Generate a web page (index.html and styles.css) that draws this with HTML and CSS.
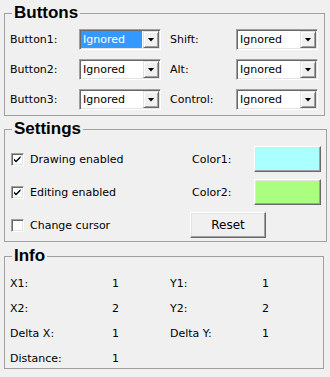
FILE: index.html
```html
<!DOCTYPE html>
<html>
<head>
  <meta charset="UTF-8">
  <title>Mouse settings</title>
  <link rel="stylesheet" href="styles.css">
</head>
<body>
  <fieldset class="group buttons-group">
    <legend>Buttons</legend>
    <div class="buttons-grid">
      <span>Button1:</span>
      <div class="combo selected"><span class="combo-text">Ignored</span><span class="combo-arrow"></span></div>
      <span>Shift:</span>
      <div class="combo"><span class="combo-text">Ignored</span><span class="combo-arrow"></span></div>

      <span>Button2:</span>
      <div class="combo"><span class="combo-text">Ignored</span><span class="combo-arrow"></span></div>
      <span>Alt:</span>
      <div class="combo"><span class="combo-text">Ignored</span><span class="combo-arrow"></span></div>

      <span>Button3:</span>
      <div class="combo"><span class="combo-text">Ignored</span><span class="combo-arrow"></span></div>
      <span>Control:</span>
      <div class="combo"><span class="combo-text">Ignored</span><span class="combo-arrow"></span></div>
    </div>
  </fieldset>

  <fieldset class="group settings-group">
    <legend>Settings</legend>
    <div class="settings-grid">
      <label class="check">
        <span class="box"><svg width="9" height="9" viewBox="0 0 9 9"><path d="M1 3.5 L3 5.5 L7.5 1 L7.5 3 L3 7.5 L1 5.5 Z" fill="#000"/></svg></span>
        Drawing enabled
      </label>
      <span>Color1:</span>
      <div class="button swatch cyan"></div>

      <label class="check">
        <span class="box"><svg width="9" height="9" viewBox="0 0 9 9"><path d="M1 3.5 L3 5.5 L7.5 1 L7.5 3 L3 7.5 L1 5.5 Z" fill="#000"/></svg></span>
        Editing enabled
      </label>
      <span>Color2:</span>
      <div class="button swatch green"></div>

      <label class="check">
        <span class="box"></span>
        Change cursor
      </label>
      <div class="button reset">Reset</div>
    </div>
  </fieldset>

  <fieldset class="group info-group">
    <legend>Info</legend>
    <div class="info-grid">
      <span>X1:</span><span>1</span><span>Y1:</span><span>1</span>
      <span>X2:</span><span>2</span><span>Y2:</span><span>2</span>
      <span>Delta X:</span><span>1</span><span>Delta Y:</span><span>1</span>
      <span>Distance:</span><span>1</span>
    </div>
  </fieldset>
</body>
</html>
```

FILE: styles.css
```css
body {
  margin: 0;
  background: #f0f0f0;
  color: #000;
  font-family: "DejaVu Sans", sans-serif;
  font-size: 11px;
}

.group {
  margin: 0 6px 0 4px;
  border: 1px solid #a0a0a0;
  padding: 0 5px 3px 5px;
}

.group legend {
  font-family: "Liberation Sans", Arial, sans-serif;
  font-weight: bold;
  font-size: 17px;
  line-height: 20px;
  padding: 0 2px;
  margin-left: 2px;
}

.buttons-group {
  margin-top: 3px;
  padding-top: 6px;
  padding-bottom: 5px;
}

.settings-group {
  margin-top: 3px;
  padding-top: 7px;
}

.info-group {
  margin-top: 4px;
  padding-top: 10px;
}

/* buttons */
.buttons-grid {
  display: grid;
  grid-template-columns: 69px 91px 66px 83px;
  grid-auto-rows: 21px;
  row-gap: 9px;
  align-items: center;
}

.combo {
  box-sizing: border-box;
  width: 82px;
  height: 21px;
  display: flex;
  background: #fff;
  border: 1px solid;
  border-color: #a0a0a0 #fff #fff #a0a0a0;
  box-shadow: inset 1px 1px 0 #696969, inset -1px -1px 0 #e3e3e3;
  padding: 1px 1px 1px 1px;
}

.combo-text {
  flex: 1;
  margin-left: 1px;
  padding-left: 1px;
  line-height: 17px;
}

.combo.selected .combo-text {
  background: #3399ff;
  color: #fff;
  margin-left: 0;
  padding-left: 2px;
  margin-right: 1px;
}

.combo-arrow {
  box-sizing: border-box;
  width: 16px;
  height: 17px;
  background: #f0f0f0;
  border: 1px solid;
  border-color: #e3e3e3 #696969 #696969 #e3e3e3;
  box-shadow: inset 1px 1px 0 #fff, inset -1px -1px 0 #a0a0a0;
  display: flex;
  align-items: center;
  justify-content: center;
}

.combo-arrow::after {
  content: "";
  width: 7px;
  height: 4px;
  background: #000;
  clip-path: polygon(0 0, 100% 0, 50% 100%);
}

/* settings */
.settings-grid {
  display: grid;
  grid-template-columns: 182px 62px 67px;
  grid-template-rows: 26px 26px 26px;
  row-gap: 7px;
  align-items: center;
}

.check {
  display: flex;
  align-items: center;
  gap: 6px;
  padding-left: 1px;
}

.box {
  box-sizing: border-box;
  width: 13px;
  height: 13px;
  background: #fff;
  border: 1px solid;
  border-color: #a0a0a0 #fff #fff #a0a0a0;
  box-shadow: inset 1px 1px 0 #696969, inset -1px -1px 0 #e3e3e3;
  display: flex;
  align-items: center;
  justify-content: center;
}

.box svg {
  display: block;
}

.button {
  box-sizing: border-box;
  height: 26px;
  border: 1px solid;
  border-color: #fff #696969 #696969 #fff;
  box-shadow: inset -1px -1px 0 #a0a0a0, inset 1px 1px 0 #e3e3e3;
  background: #f0f0f0;
}

.swatch.cyan {
  background: #aaffff;
}

.swatch.green {
  background: #aaff80;
}

.reset {
  grid-column: 2 / span 2;
  width: 76px;
  margin-left: -2px;
  display: flex;
  align-items: center;
  justify-content: center;
  font-size: 12px;
}

/* info */
.info-grid {
  display: grid;
  grid-template-columns: 102px 58px 92px 1fr;
  grid-auto-rows: 14px;
  row-gap: 11px;
  align-items: center;
}
```
